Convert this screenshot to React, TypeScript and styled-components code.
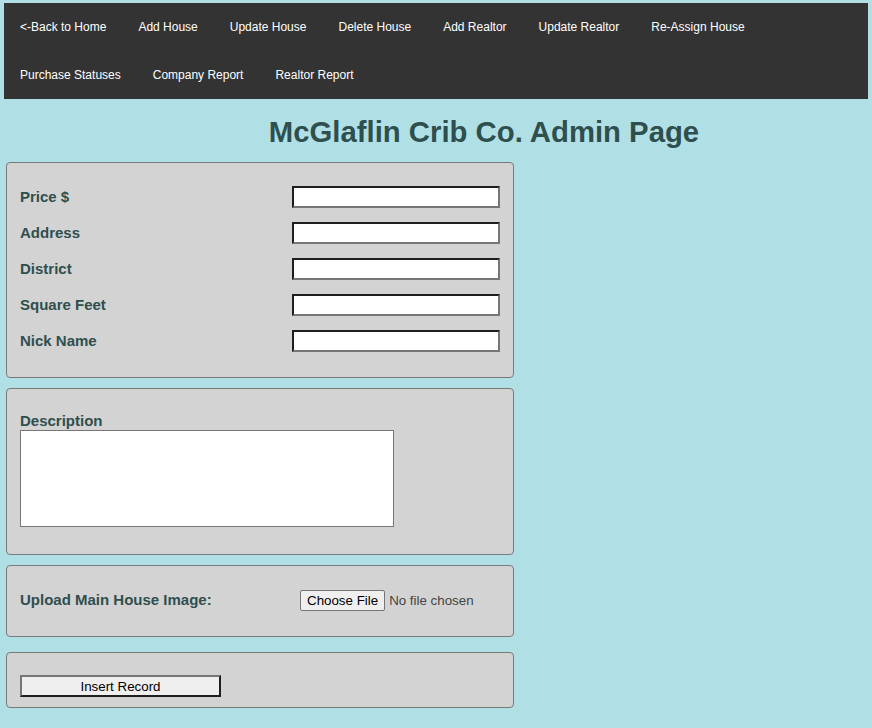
import React from "react";
import styled, { createGlobalStyle } from "styled-components";

const Global = createGlobalStyle`
  html, body { margin: 0; padding: 0; background: #b0e0e6; }
  body { font-family: "Liberation Sans", Arial, sans-serif; }
  * { box-sizing: border-box; }
`;

const Page = styled.div`
  padding: 3px 4px 20px;
  min-height: 728px;
`;

const Nav = styled.nav`
  background: #333333;
  display: flex;
  flex-wrap: wrap;
`;

const NavLink = styled.a`
  display: block;
  color: #ffffff;
  font-family: "Liberation Sans", Arial, sans-serif;
  font-size: 12px;
  line-height: 20px;
  padding: 14px 16px;
  text-decoration: none;
  cursor: pointer;
`;

const Title = styled.h1`
  margin: 0;
  padding: 16px 0 13px 96px;
  text-align: center;
  font-family: "Liberation Sans", Arial, sans-serif;
  font-weight: bold;
  font-size: 29.3px;
  line-height: 34px;
  color: #2f4f4f;
`;

const Form = styled.form`
  padding: 0 2px;
  width: 512px;
  display: flex;
  flex-direction: column;
`;

const Panel = styled.div<{ $pad: string; $gap?: number }>`
  background: #d3d3d3;
  border: 1px solid #7a7a7a;
  border-radius: 4px;
  padding: ${(p) => p.$pad};
  margin-bottom: ${(p) => (p.$gap ?? 10)}px;
`;

const Row = styled.div`
  display: flex;
  align-items: center;
  justify-content: space-between;
  height: 36px;
`;

const Label = styled.label`
  font-family: "Liberation Sans", Arial, sans-serif;
  font-weight: bold;
  font-size: 15px;
  line-height: 18px;
  color: #2f4f4f;
`;

const UploadLabel = styled(Label)`
  width: 280px;
  flex: none;
`;

const TextInput = styled.input`
  width: 208px;
  height: 22px;
  background: #ffffff;
  border-style: solid;
  border-width: 2px;
  border-color: #1e1e1e #767676 #767676 #1e1e1e;
  padding: 1px 2px;
  margin: 0;
  outline: none;
`;

const DescLabel = styled(Label)`
  display: block;
  padding-top: 1px;
`;

const TextArea = styled.textarea`
  display: block;
  width: 374px;
  height: 97px;
  border: 1px solid #767676;
  background: #ffffff;
  resize: none;
  margin: 0;
`;

const UploadRow = styled.div`
  display: flex;
  align-items: center;
  height: 22px;
`;

const FileInput = styled.input`
  font-family: "Liberation Sans", Arial, sans-serif;
  font-size: 13.33px;
  color: #444444;
  &::file-selector-button {
    font-family: "Liberation Sans", Arial, sans-serif;
    font-size: 13.33px;
    color: #000000;
    background: #efefef;
    border: 1px solid #767676;
    border-radius: 2px;
    padding: 1px 6px;
    margin-right: 4px;
    height: 21px;
  }
`;

const SubmitButton = styled.button`
  display: block;
  width: 201px;
  height: 22px;
  background: #efefef;
  border-style: solid;
  border-width: 2px;
  border-color: #767676 #1e1e1e #1e1e1e #767676;
  font-family: "Liberation Sans", Arial, sans-serif;
  font-size: 13.33px;
  color: #000000;
  padding: 0;
  margin: 0;
`;

const links = [
  "<-Back to Home",
  "Add House",
  "Update House",
  "Delete House",
  "Add Realtor",
  "Update Realtor",
  "Re-Assign House",
  "Purchase Statuses",
  "Company Report",
  "Realtor Report",
];

const fields = ["Price $", "Address", "District", "Square Feet", "Nick Name"];

export default function App() {
  return (
    <>
      <Global />
      <Page>
        <Nav>
          {links.map((l) => (
            <NavLink key={l}>{l}</NavLink>
          ))}
        </Nav>
        <Title>McGlaflin Crib Co. Admin Page</Title>
        <Form onSubmit={(e) => e.preventDefault()}>
          <Panel $pad="16px 13px 18px">
            {fields.map((f) => (
              <Row key={f}>
                <Label>{f}</Label>
                <TextInput type="text" />
              </Row>
            ))}
          </Panel>
          <Panel $pad="22px 13px 27px">
            <DescLabel>Description</DescLabel>
            <TextArea />
          </Panel>
          <Panel $pad="23px 13px 25px" $gap={15}>
            <UploadRow>
              <UploadLabel>Upload Main House Image:</UploadLabel>
              <FileInput type="file" />
            </UploadRow>
          </Panel>
          <Panel $pad="22px 13px 10px">
            <SubmitButton type="button">Insert Record</SubmitButton>
          </Panel>
        </Form>
      </Page>
    </>
  );
}
